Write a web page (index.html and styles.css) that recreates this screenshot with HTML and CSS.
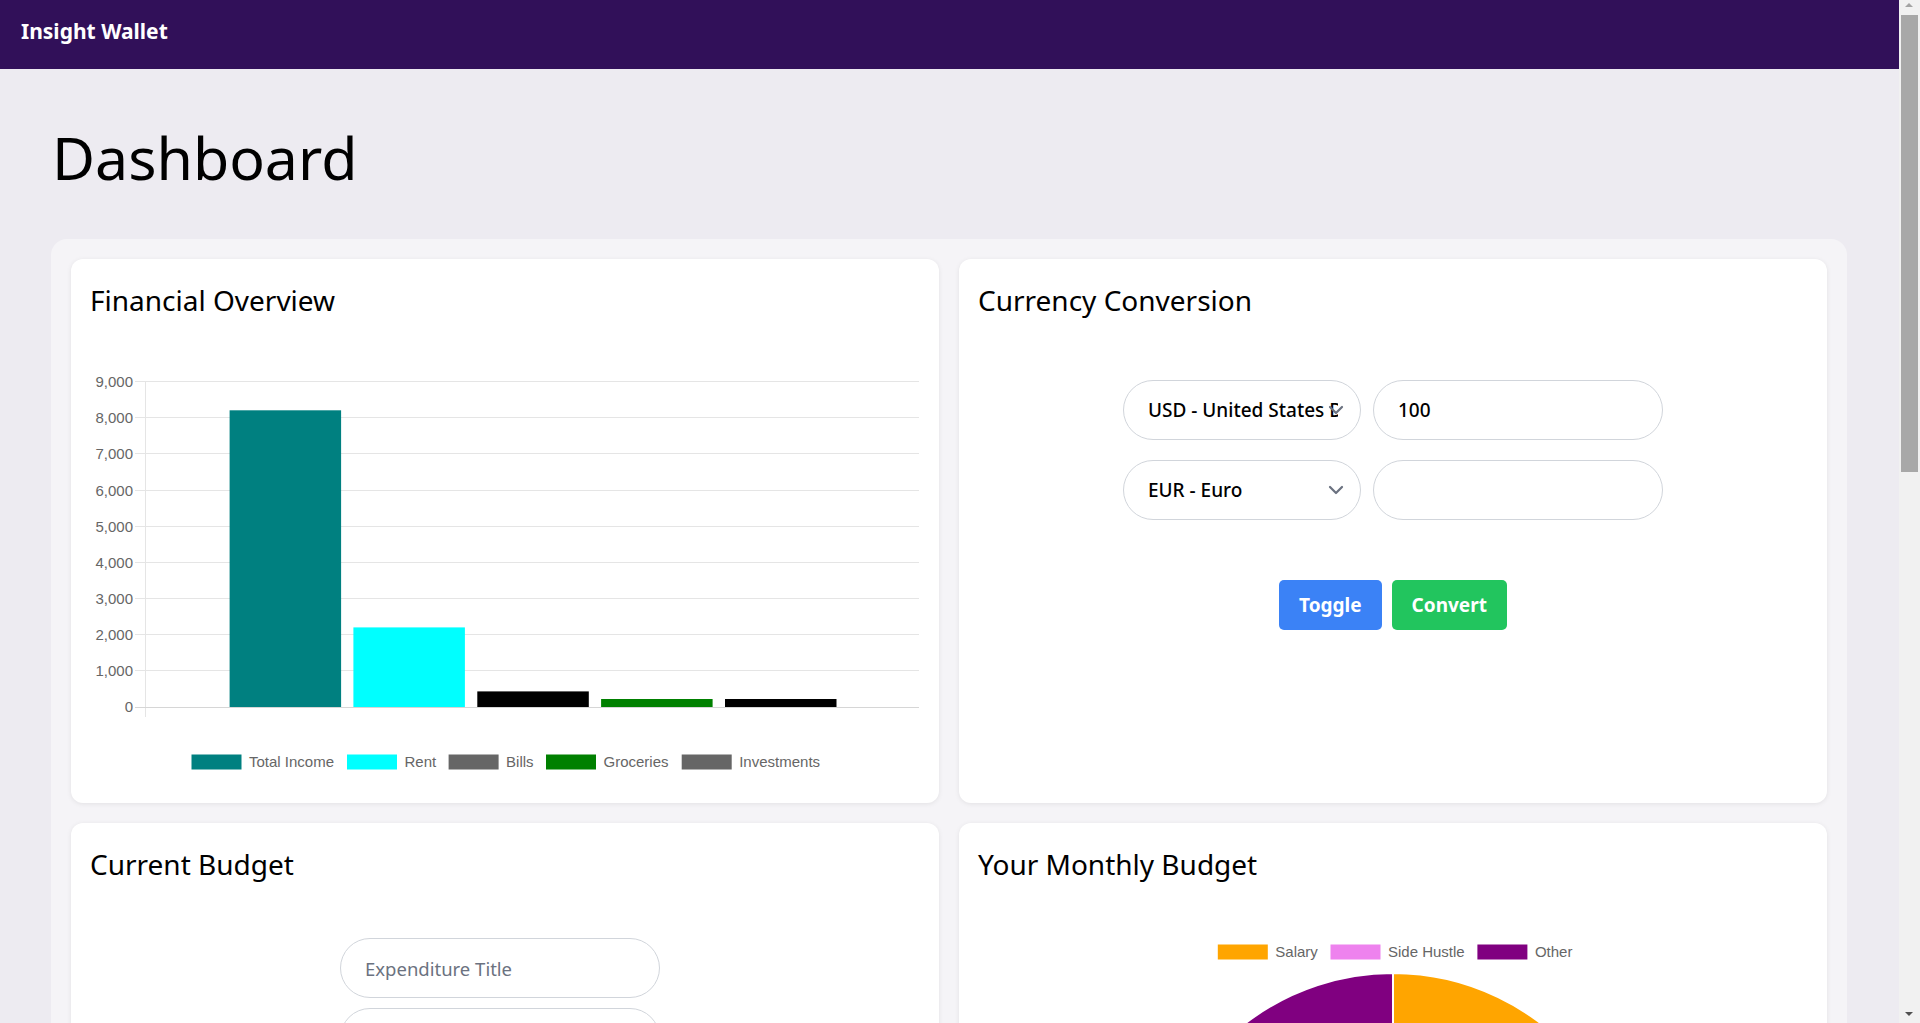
FILE: index.html
```html
<!DOCTYPE html>
<html lang="en">
<head>
<meta charset="utf-8">
<title>Insight Wallet - Dashboard</title>
<link rel="stylesheet" href="styles.css">
</head>
<body>
<nav class="navbar"><span class="brand">Insight Wallet</span></nav>
<main class="page">
  <h1 class="page-title">Dashboard</h1>
  <section class="dashboard">
    <article class="card">
      <h2 class="card-title">Financial Overview</h2>
      <svg class="chart" width="828" height="452" viewBox="0 0 828 452">
        <g class="grid" stroke="#e5e5e5" stroke-width="1">
          <line x1="44" y1="51.5" x2="828" y2="51.5"/>
          <line x1="44" y1="87.5" x2="828" y2="87.5"/>
          <line x1="44" y1="123.5" x2="828" y2="123.5"/>
          <line x1="44" y1="160.5" x2="828" y2="160.5"/>
          <line x1="44" y1="196.5" x2="828" y2="196.5"/>
          <line x1="44" y1="232.5" x2="828" y2="232.5"/>
          <line x1="44" y1="268.5" x2="828" y2="268.5"/>
          <line x1="44" y1="304.5" x2="828" y2="304.5"/>
          <line x1="44" y1="340.5" x2="828" y2="340.5"/>
          <line x1="54.5" y1="51" x2="54.5" y2="387"/>
        </g>
        <line x1="44" y1="377.5" x2="828" y2="377.5" stroke="#d6d6d6" stroke-width="1"/>
        <g class="ticks" font-family="Liberation Sans, Arial, sans-serif" font-size="15" fill="#666" text-anchor="end">
          <text x="42" y="56.8">9,000</text>
          <text x="42" y="92.8">8,000</text>
          <text x="42" y="128.8">7,000</text>
          <text x="42" y="165.8">6,000</text>
          <text x="42" y="201.8">5,000</text>
          <text x="42" y="237.8">4,000</text>
          <text x="42" y="273.8">3,000</text>
          <text x="42" y="309.8">2,000</text>
          <text x="42" y="345.8">1,000</text>
          <text x="42" y="382.3">0</text>
        </g>
        <rect x="138.6" y="80.3" width="111.5" height="296.7" fill="#008080"/>
        <rect x="262.4" y="297.4" width="111.5" height="79.6" fill="#00ffff"/>
        <rect x="386.3" y="361.4" width="111.5" height="15.6" fill="#000"/>
        <rect x="510.1" y="369" width="111.5" height="8" fill="#008000"/>
        <rect x="634" y="369" width="111.5" height="8" fill="#000"/>
        <g class="legend" font-family="Liberation Sans, Arial, sans-serif" font-size="15" fill="#666">
          <rect x="100.5" y="424.5" width="50" height="15" fill="#008080"/>
          <text x="158" y="437.3">Total Income</text>
          <rect x="256" y="424.5" width="50" height="15" fill="#00ffff"/>
          <text x="313.5" y="437.3">Rent</text>
          <rect x="357.6" y="424.5" width="50" height="15" fill="#666"/>
          <text x="415.1" y="437.3">Bills</text>
          <rect x="455" y="424.5" width="50" height="15" fill="#008000"/>
          <text x="512.5" y="437.3">Groceries</text>
          <rect x="590.7" y="424.5" width="50" height="15" fill="#666"/>
          <text x="648.2" y="437.3">Investments</text>
        </g>
      </svg>
    </article>

    <article class="card">
      <h2 class="card-title">Currency Conversion</h2>
      <div class="converter">
        <div class="converter-row">
          <div class="select-wrap">
            <select class="pill-select"><option>USD - United States Dollar</option><option>EUR - Euro</option></select>
            <svg class="chevron" viewBox="0 0 20 20"><path d="M6 8l4 4 4-4" fill="none" stroke="#6b7280" stroke-width="1.5" stroke-linecap="round" stroke-linejoin="round"/></svg>
          </div>
          <input class="pill-input" type="text" value="100">
        </div>
        <div class="converter-row">
          <div class="select-wrap">
            <select class="pill-select"><option>EUR - Euro</option><option>USD - United States Dollar</option></select>
            <svg class="chevron" viewBox="0 0 20 20"><path d="M6 8l4 4 4-4" fill="none" stroke="#6b7280" stroke-width="1.5" stroke-linecap="round" stroke-linejoin="round"/></svg>
          </div>
          <input class="pill-input" type="text" value="">
        </div>
        <div class="converter-actions">
          <button class="btn btn-blue" type="button">Toggle</button>
          <button class="btn btn-green" type="button">Convert</button>
        </div>
      </div>
    </article>

    <article class="card card-tall">
      <h2 class="card-title">Current Budget</h2>
      <form class="budget-form">
        <input class="pill-input wide" type="text" placeholder="Expenditure Title">
        <input class="pill-input wide" type="text" placeholder="Amount">
        <input class="pill-input wide" type="text" placeholder="Category">
        <button class="btn btn-blue" type="button">Add Expenditure</button>
      </form>
    </article>

    <article class="card card-tall">
      <h2 class="card-title">Your Monthly Budget</h2>
      <svg class="chart" width="828" height="600" viewBox="0 0 828 600">
        <g class="legend" font-family="Liberation Sans, Arial, sans-serif" font-size="15" fill="#666">
          <rect x="238.8" y="50.5" width="50" height="15" fill="#ffa500"/>
          <text x="296.3" y="63.3">Salary</text>
          <rect x="351.5" y="50.5" width="50" height="15" fill="#ee82ee"/>
          <text x="409" y="63.3">Side Hustle</text>
          <rect x="498.4" y="50.5" width="50" height="15" fill="#800080"/>
          <text x="555.9" y="63.3">Other</text>
        </g>
        <g stroke="#fff" stroke-width="2">
          <path d="M414 321 L414 79 A242 242 0 1 1 260.1 507.8 Z" fill="#ffa500"/>
          <path d="M414 321 L260.1 507.8 A242 242 0 0 1 180.7 256.7 Z" fill="#ee82ee"/>
          <path d="M414 321 L180.7 256.7 A242 242 0 0 1 414 79 Z" fill="#800080"/>
        </g>
      </svg>
    </article>
  </section>
</main>
<div class="scrollbar" aria-hidden="true">
  <span class="sb-arrow sb-up"></span>
  <span class="sb-thumb"></span>
  <span class="sb-arrow sb-down"></span>
</div>
</body>
</html>
```

FILE: styles.css
```css
html {
  background: #edebf1;
}

body {
  margin: 0;
  padding-right: 21px;
  background: #edebf1;
  font-family: "Noto Sans", "Open Sans", sans-serif;
  color: #000;
}

.scrollbar {
  position: fixed;
  top: 0;
  right: 0;
  width: 21px;
  height: 100vh;
  background: #f1f1f1;
}

.sb-thumb {
  position: absolute;
  top: 15px;
  left: 2px;
  right: 2px;
  height: 457px;
  background: #a8a8a8;
}

.sb-arrow {
  position: absolute;
  left: 6px;
  width: 0;
  height: 0;
  border-left: 4.5px solid transparent;
  border-right: 4.5px solid transparent;
}

.sb-up {
  top: 3px;
  border-bottom: 4.5px solid #a3a3a3;
}

.sb-down {
  bottom: 7px;
  border-top: 4.5px solid #505050;
}

.navbar {
  height: 69px;
  box-sizing: border-box;
  padding: 21px 0 0 21px;
  background: #311059;
}

.brand {
  display: block;
  font-size: 21px;
  line-height: 21px;
  font-weight: 700;
  color: #fff;
}

.page {
  padding: 0 52px 50px 51px;
}

.page-title {
  margin: 59px 0 53px 1px;
  font-size: 59px;
  line-height: 58px;
  font-weight: 400;
}

.dashboard {
  display: grid;
  grid-template-columns: 1fr 1fr;
  gap: 20px;
  padding: 20px;
  background: #f5f4f7;
  border-radius: 16px;
}

.card {
  background: #fff;
  border-radius: 12px;
  padding: 24px 20px 21px;
  box-shadow: 0 1px 5px rgba(0, 0, 0, 0.08);
}

.card-tall {
  min-height: 1282px;
}

.card-title {
  margin: 0 0 13px -1px;
  font-size: 28px;
  line-height: 34px;
  font-weight: 400;
}

.chart {
  display: block;
}

.converter {
  display: flex;
  flex-direction: column;
  align-items: center;
  gap: 20px;
  padding-top: 50px;
}

.converter-row {
  display: flex;
  gap: 12px;
}

.select-wrap {
  position: relative;
}

.pill-select {
  appearance: none;
  -webkit-appearance: none;
  display: block;
  width: 238px;
  height: 60px;
  box-sizing: border-box;
  border: 1px solid #d1d5db;
  border-radius: 9999px;
  padding: 0 22px 0 24px;
  background: #fff;
  color: #000;
  font-family: "Noto Sans", sans-serif;
  font-size: 19px;
  font-weight: 500;
}

.chevron {
  position: absolute;
  right: 10px;
  top: 15px;
  width: 30px;
  height: 30px;
  pointer-events: none;
}

.pill-input {
  display: block;
  width: 290px;
  height: 60px;
  box-sizing: border-box;
  border: 1px solid #d1d5db;
  border-radius: 9999px;
  padding: 0 24px;
  background: #fff;
  color: #000;
  font-family: "Noto Sans", sans-serif;
  font-size: 19px;
  font-weight: 500;
}

.pill-input::placeholder {
  color: #6b7280;
  font-weight: 400;
}

.pill-input.wide {
  width: 320px;
  font-size: 18.5px;
}

.converter-actions {
  display: flex;
  gap: 10px;
  margin-top: 40px;
}

.btn {
  height: 50px;
  padding: 0 20px;
  border: 0;
  border-radius: 5px;
  color: #fff;
  font-family: "Noto Sans", sans-serif;
  font-size: 19px;
  font-weight: 700;
}

.btn-blue {
  background: #3b82f6;
}

.btn-green {
  background: #22c55e;
}

.budget-form {
  display: flex;
  flex-direction: column;
  align-items: center;
  gap: 10px;
  padding: 44px 10px 0 0;
  margin: 0;
}
```
